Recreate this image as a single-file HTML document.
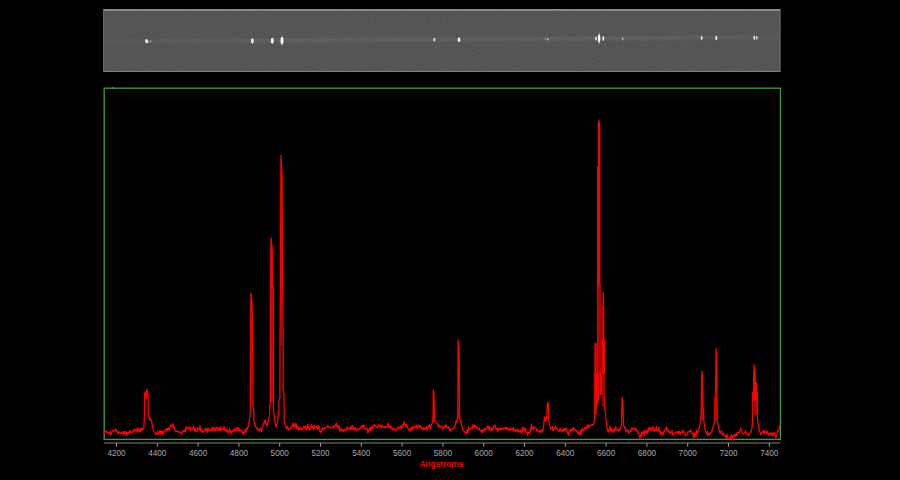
<!DOCTYPE html>
<html><head><meta charset="utf-8"><title>Spectrum</title>
<style>
html,body{margin:0;padding:0;background:#000;}
body{width:900px;height:480px;overflow:hidden;font-family:"Liberation Sans",sans-serif;}
svg{display:block}
.lab text{font-family:"Liberation Sans",sans-serif;font-size:8.2px;fill:#a8a8a8;text-anchor:middle}
.ttl{font-family:"Liberation Sans",sans-serif;font-size:8.3px;font-weight:bold;fill:#f00000;text-anchor:middle}
</style></head><body>
<svg width="900" height="480" viewBox="0 0 900 480">
<defs>
<filter id="nz" x="0" y="0" width="100%" height="100%" color-interpolation-filters="sRGB"><feTurbulence type="fractalNoise" baseFrequency="0.75" numOctaves="1" seed="5" result="t"/><feGaussianBlur stdDeviation="0.45"/><feColorMatrix type="matrix" values="0.10 0 0 0 0.284  0.10 0 0 0 0.284  0.10 0 0 0 0.284  0 0 0 0 1"/></filter>
<filter id="b1" x="-50%" y="-50%" width="200%" height="200%"><feGaussianBlur stdDeviation="0.65"/></filter>
<filter id="b2" x="-5%" y="-300%" width="110%" height="700%"><feGaussianBlur stdDeviation="1.1"/></filter>
<linearGradient id="sg" gradientUnits="userSpaceOnUse" x1="103" y1="0" x2="780" y2="0"><stop offset="0" stop-color="#fff" stop-opacity="0.02"/><stop offset="0.08" stop-color="#fff" stop-opacity="0.05"/><stop offset="0.25" stop-color="#fff" stop-opacity="0.085"/><stop offset="0.75" stop-color="#fff" stop-opacity="0.085"/><stop offset="0.9" stop-color="#fff" stop-opacity="0.07"/><stop offset="1" stop-color="#fff" stop-opacity="0.03"/></linearGradient>
<clipPath id="cs"><rect x="103" y="9" width="677.5" height="63"/></clipPath>
</defs>
<rect width="900" height="480" fill="#000"/>
<!-- spectrum image strip -->
<g clip-path="url(#cs)">
<rect x="103" y="9" width="677.5" height="63" fill="#555"/>
<rect x="103" y="9" width="677.5" height="63" filter="url(#nz)"/>
<line x1="103" y1="41.3" x2="780" y2="37.4" stroke="url(#sg)" stroke-width="3" filter="url(#b2)"/>
<g filter="url(#b1)"><ellipse cx="146.5" cy="41.0" rx="1.5" ry="2.0" fill="#fff" opacity="0.80"/><ellipse cx="147.4" cy="42.0" rx="1.2" ry="1.4" fill="#fff" opacity="0.60"/><ellipse cx="150.6" cy="41.2" rx="0.9" ry="1.5" fill="#fff" opacity="0.30"/><ellipse cx="252.4" cy="40.9" rx="1.3" ry="2.6" fill="#fff" opacity="1.00"/><ellipse cx="272.3" cy="40.8" rx="1.4" ry="3.0" fill="#fff" opacity="1.00"/><ellipse cx="282.0" cy="40.6" rx="1.5" ry="3.6" fill="#fff" opacity="1.00"/><ellipse cx="282.0" cy="40.8" rx="0.8" ry="5.6" fill="#fff" opacity="0.40"/><ellipse cx="434.3" cy="39.7" rx="1.0" ry="1.9" fill="#fff" opacity="0.80"/><ellipse cx="459.0" cy="39.7" rx="1.3" ry="2.3" fill="#fff" opacity="1.00"/><ellipse cx="547.8" cy="39.0" rx="1.0" ry="1.5" fill="#fff" opacity="0.45"/><ellipse cx="545.4" cy="39.0" rx="0.7" ry="1.3" fill="#fff" opacity="0.28"/><ellipse cx="596.0" cy="38.5" rx="0.9" ry="2.0" fill="#fff" opacity="0.85"/><ellipse cx="599.1" cy="38.4" rx="1.2" ry="4.0" fill="#fff" opacity="1.00"/><ellipse cx="599.1" cy="38.4" rx="0.7" ry="6.2" fill="#fff" opacity="0.45"/><ellipse cx="603.3" cy="38.5" rx="0.9" ry="2.4" fill="#fff" opacity="0.90"/><ellipse cx="622.7" cy="38.7" rx="0.8" ry="1.6" fill="#fff" opacity="0.50"/><ellipse cx="701.7" cy="38.0" rx="0.9" ry="2.0" fill="#fff" opacity="0.85"/><ellipse cx="716.3" cy="38.0" rx="0.9" ry="2.3" fill="#fff" opacity="1.00"/><ellipse cx="754.3" cy="37.7" rx="0.9" ry="2.2" fill="#fff" opacity="0.85"/><ellipse cx="756.8" cy="37.7" rx="0.8" ry="2.0" fill="#fff" opacity="0.80"/></g>
<rect x="103" y="9" width="677.5" height="1.8" fill="#8e8e8e"/>
<rect x="103" y="70.9" width="677.5" height="1.1" fill="#7e7e7e"/>
<rect x="103" y="9" width="0.8" height="63" fill="#6c6c6c"/>
<rect x="779.7" y="9" width="0.8" height="63" fill="#7a7a7a"/>
</g>
<!-- plot frame -->
<rect x="104.2" y="88.2" width="676.2" height="351.2" fill="none" stroke="#3e993f" stroke-width="1.35"/>
<rect x="111.8" y="87.3" width="2" height="1.2" fill="#8a9a8a" opacity="0.8"/>
<!-- spectrum -->
<g fill="#b00000">
<rect x="432.8" y="415.5" width="2.2" height="6"/>
<rect x="457.8" y="410.5" width="2" height="8"/>
<rect x="701" y="407.5" width="2.8" height="12.5"/>
<rect x="714.8" y="396.5" width="2.5" height="23.5"/>
<rect x="755.5" y="400" width="1.9" height="14.5"/>
<rect x="271" y="287" width="2.2" height="115" fill="#a80000"/><rect x="270.8" y="246" width="1.9" height="41.5" fill="#ff0000"/><rect x="280.9" y="180" width="1.3" height="165" fill="#a00000"/>
</g>
<g fill="none" stroke="#ff0000" stroke-width="1.3" stroke-linejoin="round" stroke-linecap="round">
<polyline points="104.0,432.4 104.5,433.1 105.0,432.0 105.5,431.7 106.0,430.7 106.5,431.4 107.0,432.9 107.5,432.3 108.0,433.4 108.5,432.7 109.0,433.2 109.5,433.3 110.0,431.3 110.5,434.8 111.0,434.6 111.5,434.1 112.0,430.8 112.5,430.3 113.0,430.8 113.5,430.8 114.0,431.2 114.5,430.3 115.0,430.5 115.5,428.9 116.0,430.5 116.5,431.0 117.0,430.0 117.5,433.4 118.0,432.4 118.5,433.6 119.0,431.7 119.5,432.0 120.0,432.9 120.5,433.1 121.0,433.9 121.5,433.4 122.0,432.4 122.5,431.7 123.0,432.2 123.5,434.3 124.0,431.7 124.5,433.3 125.0,433.8 125.5,431.7 126.0,433.9 126.5,435.7 127.0,431.8 127.5,433.9 128.0,433.7 128.5,432.3 129.0,433.5 129.5,432.4 130.0,430.1 130.5,432.5 131.0,432.1 131.5,432.4 132.0,432.9 132.5,431.5 133.0,431.1 133.5,429.3 134.0,431.6 134.5,430.0 135.0,430.2 135.5,429.1 136.0,429.3 136.5,429.8 137.0,432.0 137.5,427.7 138.0,428.3 138.5,430.3 139.0,432.1 139.5,431.5 140.0,428.9 140.5,428.7 141.0,431.8 141.5,429.5 142.0,428.0 142.5,429.6 143.0,429.5 143.7,429.0 144.4,417.0 144.7,393.0 145.6,391.5 146.3,398.0 147.2,389.0 147.8,393.0 148.1,399.0 148.4,416.0 149.1,417.5 149.8,420.0 150.7,418.5 151.4,420.5 152.0,424.0 152.7,427.0 153.3,430.0 154.0,431.7 154.5,432.1 155.0,432.6 155.5,434.3 156.0,433.4 156.5,433.5 157.0,433.8 157.5,431.3 158.0,434.8 158.5,434.4 159.0,433.8 159.5,430.6 160.0,432.2 160.5,434.0 161.0,430.7 161.5,432.6 162.0,434.1 162.5,431.1 163.0,434.7 163.5,433.1 164.0,431.4 164.5,431.2 165.0,430.8 165.5,429.6 166.0,430.8 166.5,428.4 167.0,428.6 167.5,430.4 168.0,429.0 168.5,427.8 169.0,429.9 169.5,430.3 170.0,427.2 170.5,425.4 171.0,426.3 171.5,425.6 172.0,424.8 172.5,426.2 173.0,423.7 173.5,427.8 174.0,425.9 174.5,427.8 175.0,430.3 175.5,431.3 176.0,431.4 176.5,431.1 177.0,431.2 177.5,431.5 178.0,432.1 178.5,431.3 179.0,431.9 179.5,432.4 180.0,431.8 180.5,432.8 181.0,432.7 181.5,434.4 182.0,432.1 182.5,430.9 183.0,430.7 183.5,430.9 184.0,431.8 184.5,430.0 185.0,430.6 185.5,432.1 186.0,426.3 186.5,427.7 187.0,429.0 187.5,428.8 188.0,428.2 188.5,427.0 189.0,428.0 189.5,427.4 190.0,426.9 190.5,431.0 191.0,428.9 191.5,428.2 192.0,429.2 192.5,429.1 193.0,429.4 193.5,426.2 194.0,429.0 194.5,431.0 195.0,428.4 195.5,429.8 196.0,431.2 196.5,430.9 197.0,431.5 197.5,427.4 198.0,428.9 198.5,428.8 199.0,429.8 199.5,430.2 200.0,425.3 200.5,430.9 201.0,428.5 201.5,432.0 202.0,430.1 202.5,431.7 203.0,432.5 203.5,430.3 204.0,430.2 204.5,430.5 205.0,429.2 205.5,428.6 206.0,430.8 206.5,430.3 207.0,428.7 207.5,432.7 208.0,427.9 208.5,430.6 209.0,429.3 209.5,429.9 210.0,430.7 210.5,430.2 211.0,430.7 211.5,427.9 212.0,427.8 212.5,430.3 213.0,428.2 213.5,428.0 214.0,427.3 214.5,430.6 215.0,429.9 215.5,430.8 216.0,427.7 216.5,428.9 217.0,427.4 217.5,429.7 218.0,430.7 218.5,427.6 219.0,430.8 219.5,430.2 220.0,428.9 220.5,426.9 221.0,431.3 221.5,429.1 222.0,428.2 222.5,429.2 223.0,429.0 223.5,430.1 224.0,426.7 224.5,429.8 225.0,430.7 225.5,431.1 226.0,429.4 226.5,429.2 227.0,431.8 227.5,430.9 228.0,431.2 228.5,433.2 229.0,431.3 229.5,429.1 230.0,431.8 230.5,430.2 231.0,433.8 231.5,433.1 232.0,431.2 232.5,431.2 233.0,431.5 233.5,429.9 234.0,430.7 234.5,428.2 235.0,429.5 235.5,430.3 236.0,430.8 236.5,428.3 237.0,430.5 237.5,427.4 238.0,428.6 238.5,427.7 239.0,431.7 239.5,429.0 240.0,430.7 240.5,430.6 241.0,431.0 241.5,430.5 242.0,431.8 242.5,434.0 243.0,432.1 243.5,432.9 244.0,433.8 244.5,431.8 245.0,429.9 245.5,430.3 246.0,431.8 246.5,427.9 247.4,429.0 248.1,427.3 249.0,422.0 249.8,418.0 250.3,410.0 250.7,320.0 251.0,292.8 252.0,301.5 252.5,330.0 253.0,407.0 253.7,409.0 253.9,420.8 255.0,425.0 256.3,428.4 257.0,427.6 257.5,430.0 258.0,430.1 258.5,429.5 259.0,430.7 259.5,430.0 260.0,428.5 260.5,428.2 261.0,429.5 261.5,431.7 262.0,428.4 262.5,426.6 263.0,425.4 263.5,423.1 264.0,423.4 264.5,420.6 265.0,422.6 265.5,420.3 266.0,424.8 266.5,424.5 267.1,425.7 268.4,420.8 269.6,414.0 270.0,404.0 270.6,402.0 270.7,300.0 271.0,238.0 272.0,251.0 272.3,286.5 273.3,288.0 273.4,300.0 273.4,411.0 274.2,415.0 274.7,419.8 275.5,424.0 276.3,427.3 276.5,424.6 277.1,425.0 277.4,423.0 278.2,416.0 278.9,410.0 279.0,400.0 279.9,398.0 280.0,350.0 280.6,250.0 281.0,155.5 282.0,174.0 282.4,250.0 283.2,350.0 283.2,391.0 284.0,393.0 284.2,420.0 285.0,424.5 286.0,427.3 286.5,428.9 287.0,428.1 287.5,426.1 288.0,428.3 288.5,430.2 289.0,429.0 289.5,429.7 290.0,428.9 290.5,428.1 291.0,426.9 291.5,427.6 292.0,426.6 292.5,426.1 293.0,422.8 293.5,426.3 294.0,426.6 294.5,424.4 295.0,424.0 295.5,427.1 296.0,423.1 296.5,426.4 297.0,429.4 297.5,425.8 298.0,428.4 298.5,430.0 299.0,427.7 299.5,428.8 300.0,429.4 300.5,427.3 301.0,428.5 301.5,429.2 302.0,430.0 302.5,428.6 303.0,428.0 303.5,426.6 304.0,427.1 304.5,428.4 305.0,427.3 305.5,425.9 306.0,425.7 306.5,429.9 307.0,428.1 307.5,427.8 308.0,424.0 308.5,428.3 309.0,428.4 309.5,430.0 310.0,428.1 310.5,427.2 311.0,427.7 311.5,424.3 312.0,427.8 312.5,427.0 313.0,425.9 313.5,428.5 314.0,429.3 314.5,425.4 315.0,426.4 315.5,427.7 316.0,427.7 316.5,426.8 317.0,425.8 317.5,429.4 318.0,427.8 318.5,425.8 319.0,426.3 319.5,430.9 320.0,430.8 320.5,432.6 321.0,432.1 321.5,430.2 322.0,431.1 322.5,427.6 323.0,428.8 323.5,429.1 324.0,429.4 324.5,427.4 325.0,427.7 325.5,428.0 326.0,427.5 326.5,427.5 327.0,426.5 327.5,425.7 328.0,427.5 328.5,427.0 329.0,426.2 329.5,426.8 330.0,428.0 330.5,427.8 331.0,428.0 331.5,427.7 332.0,427.8 332.5,427.3 333.0,425.8 333.5,427.6 334.0,427.9 334.5,426.7 335.0,425.4 335.5,425.7 336.0,423.5 336.5,423.1 337.0,426.3 337.5,425.8 338.0,428.6 338.5,427.0 339.0,425.6 339.5,427.9 340.0,431.5 340.5,429.3 341.0,428.4 341.5,429.3 342.0,430.7 342.5,430.4 343.0,429.8 343.5,431.3 344.0,430.1 344.5,429.0 345.0,429.6 345.5,430.7 346.0,429.8 346.5,429.8 347.0,427.0 347.5,428.1 348.0,429.1 348.5,427.8 349.0,429.4 349.5,428.6 350.0,428.6 350.5,426.9 351.0,429.9 351.5,427.9 352.0,425.7 352.5,425.8 353.0,429.3 353.5,426.6 354.0,429.1 354.5,430.1 355.0,429.3 355.5,427.7 356.0,429.3 356.5,429.5 357.0,430.4 357.5,429.9 358.0,428.8 358.5,429.8 359.0,429.2 359.5,428.6 360.0,428.1 360.5,427.5 361.0,428.4 361.5,426.0 362.0,426.3 362.5,426.8 363.0,425.1 363.5,426.8 364.0,425.2 364.5,427.2 365.0,429.2 365.5,429.5 366.0,429.1 366.5,429.2 367.0,428.1 367.5,432.5 368.0,431.2 368.5,432.2 369.0,429.6 369.5,430.0 370.0,427.5 370.5,430.3 371.0,430.1 371.5,426.1 372.0,427.9 372.5,428.5 373.0,425.3 373.5,425.0 374.0,425.7 374.5,426.0 375.0,424.7 375.5,426.3 376.0,426.3 376.5,426.9 377.0,427.0 377.5,428.1 378.0,427.7 378.5,424.7 379.0,425.7 379.5,425.1 380.0,425.2 380.5,426.5 381.0,426.8 381.5,427.5 382.0,425.0 382.5,425.6 383.0,427.2 383.5,427.1 384.0,427.1 384.5,427.3 385.0,426.3 385.5,428.0 386.0,427.4 386.5,426.8 387.0,425.9 387.5,426.4 388.0,423.1 388.5,425.5 389.0,427.1 389.5,425.4 390.0,427.8 390.5,428.1 391.0,426.4 391.5,428.1 392.0,428.3 392.5,429.5 393.0,429.9 393.5,429.3 394.0,428.4 394.5,429.5 395.0,429.8 395.5,431.0 396.0,430.7 396.5,429.0 397.0,427.9 397.5,428.7 398.0,427.9 398.5,427.0 399.0,427.9 399.5,427.1 400.0,427.4 400.5,427.5 401.0,425.8 401.5,428.8 402.0,425.0 402.5,426.3 403.0,424.8 403.5,426.0 404.0,421.5 404.5,423.4 405.0,424.6 405.5,425.0 406.0,427.0 406.5,424.4 407.0,426.3 407.5,427.0 408.0,428.4 408.5,429.1 409.0,429.6 409.5,430.9 410.0,428.3 410.5,430.6 411.0,427.2 411.5,428.2 412.0,430.0 412.5,426.9 413.0,427.2 413.5,428.5 414.0,427.0 414.5,425.9 415.0,427.2 415.5,427.5 416.0,427.6 416.5,425.5 417.0,428.4 417.5,428.0 418.0,425.7 418.5,425.7 419.0,425.0 419.5,427.7 420.0,425.5 420.5,427.7 421.0,426.7 421.5,426.8 422.0,429.0 422.5,430.2 423.0,428.6 423.5,427.6 424.0,429.3 424.5,428.0 425.0,428.3 425.5,429.6 426.0,429.0 426.5,426.7 427.0,430.1 427.5,427.1 428.0,427.9 428.5,425.9 429.0,426.5 429.5,424.4 430.0,429.1 430.5,428.9 431.5,424.5 432.3,423.0 432.9,420.5 433.1,416.0 433.3,390.0 434.0,393.0 434.4,416.0 434.9,421.0 436.0,422.5 437.5,424.0 438.3,426.5 439.0,425.0 440.2,427.3 441.0,426.4 441.5,426.2 442.0,426.2 442.5,429.8 443.0,427.9 443.5,428.1 444.0,427.4 444.5,427.3 445.0,425.7 445.5,426.7 446.0,424.6 446.5,425.9 447.0,426.9 447.5,427.6 448.0,427.2 448.5,426.9 449.0,428.7 449.5,428.4 450.0,431.1 450.5,430.3 451.0,429.4 451.5,429.1 452.0,429.0 452.5,428.8 453.0,428.6 453.5,428.4 454.3,427.3 455.3,424.5 456.0,421.0 456.6,422.5 457.3,419.0 457.8,412.0 458.1,340.0 459.1,352.5 459.5,412.0 459.9,419.0 460.8,422.0 461.8,426.0 462.9,429.5 464.0,431.0 465.0,432.8 465.5,432.9 466.0,432.4 466.5,433.8 467.0,429.7 467.5,430.1 468.0,433.0 468.5,426.9 469.0,428.3 469.5,429.0 470.0,428.7 470.5,428.8 471.0,427.7 471.5,428.2 472.0,427.6 472.5,428.3 473.0,424.7 473.5,425.8 474.0,426.7 474.5,425.2 475.0,425.0 475.5,427.5 476.0,426.2 476.5,428.2 477.0,428.7 477.5,428.5 478.0,429.1 478.5,428.8 479.0,427.6 479.5,429.8 480.0,430.9 480.5,430.1 481.0,431.1 481.5,432.3 482.0,429.9 482.5,431.4 483.0,432.6 483.5,429.2 484.0,429.7 484.5,429.0 485.0,430.8 485.5,429.0 486.0,429.4 486.5,427.1 487.0,427.6 487.5,427.3 488.0,425.5 488.5,429.9 489.0,429.6 489.5,426.7 490.0,430.2 490.5,429.5 491.0,430.6 491.5,430.0 492.0,427.3 492.5,428.4 493.0,430.1 493.5,427.1 494.0,426.1 494.5,425.2 495.0,425.0 495.5,427.3 496.0,429.5 496.5,428.3 497.0,428.5 497.5,431.4 498.0,428.4 498.5,428.7 499.0,430.2 499.5,430.2 500.0,428.2 500.5,428.0 501.0,429.9 501.5,429.8 502.0,427.9 502.5,429.0 503.0,428.3 503.5,429.3 504.0,428.4 504.5,428.1 505.0,427.6 505.5,429.1 506.0,429.2 506.5,427.3 507.0,429.1 507.5,427.3 508.0,428.6 508.5,429.7 509.0,430.9 509.5,428.8 510.0,429.4 510.5,429.8 511.0,427.8 511.5,429.7 512.0,428.9 512.5,430.3 513.0,428.5 513.5,427.5 514.0,430.0 514.5,430.5 515.0,429.6 515.5,431.5 516.0,430.2 516.5,429.9 517.0,431.3 517.5,428.9 518.0,430.2 518.5,431.0 519.0,432.2 519.5,431.0 520.0,431.7 520.5,430.5 521.0,431.8 521.5,433.6 522.0,429.3 522.5,431.8 523.0,426.7 523.5,428.2 524.0,429.0 524.5,430.8 525.0,428.6 525.5,428.2 526.0,432.3 526.5,432.7 527.0,432.6 527.5,435.3 528.0,432.4 528.5,432.7 529.0,433.7 529.5,432.2 530.0,433.1 530.5,428.7 531.0,429.0 531.5,424.4 532.0,429.0 532.5,427.3 533.0,428.7 533.5,429.9 534.0,427.0 534.5,427.2 535.0,427.4 535.5,427.5 536.0,428.2 536.5,430.3 537.0,430.0 537.5,430.3 538.0,430.2 538.5,431.8 539.0,431.5 539.5,430.9 540.0,432.1 540.5,431.3 541.0,429.8 541.5,432.7 542.0,431.2 542.5,429.1 543.0,430.0 543.6,426.0 544.2,419.0 544.8,417.0 545.3,421.0 545.8,417.5 546.4,420.0 546.9,416.0 547.3,404.0 547.9,402.5 548.4,405.0 548.7,420.0 549.2,423.0 549.5,425.0 550.3,427.5 551.0,429.0 551.5,428.8 552.0,428.4 552.5,426.5 553.0,431.0 553.5,429.2 554.0,429.6 554.5,428.5 555.0,427.8 555.5,425.8 556.0,428.7 556.5,428.2 557.0,428.4 557.5,429.9 558.0,430.2 558.5,431.6 559.0,430.4 559.5,430.7 560.0,427.9 560.5,429.9 561.0,431.1 561.5,431.8 562.0,429.5 562.5,429.5 563.0,431.4 563.5,428.7 564.0,429.7 564.5,430.6 565.0,428.2 565.5,429.9 566.0,428.4 566.5,430.5 567.0,431.1 567.5,432.2 568.0,434.4 568.5,435.5 569.0,431.3 569.5,431.0 570.0,431.9 570.5,429.5 571.0,431.0 571.5,430.7 572.0,429.2 572.5,430.3 573.0,427.8 573.5,430.7 574.0,428.0 574.5,429.1 575.0,429.4 575.5,429.7 576.0,431.4 576.5,430.8 577.0,430.6 577.5,432.2 578.0,433.9 578.5,432.4 579.0,433.2 579.5,434.4 580.0,432.7 580.5,430.3 581.0,434.6 581.5,433.8 582.0,428.1 582.5,430.1 583.0,430.3 583.5,430.7 584.0,430.0 584.5,428.5 585.0,427.2 585.5,428.4 586.0,429.2 586.5,426.3 587.0,426.1 587.5,427.2 588.0,424.6 588.5,426.5 589.0,426.1 589.5,427.0 590.0,425.4 590.5,425.0 591.0,425.3 591.5,425.3 592.0,424.2 592.5,424.6 593.0,425.2 594.0,423.0 594.5,418.0 595.0,413.0 595.4,343.0 595.8,400.0"/>
<polyline points="604.2,400.0 604.5,407.0 605.3,412.5 606.0,419.0 606.7,425.5 607.3,429.5 608.0,431.5 608.5,432.0 609.0,428.7 609.5,429.0 610.0,426.2 610.5,431.5 611.0,428.1 611.5,429.7 612.0,431.2 612.5,429.6 613.0,432.6 613.5,431.4 614.0,428.6 614.5,430.6 615.0,431.2 615.5,426.7 616.0,429.5 616.5,429.0 617.0,429.6 617.5,429.8 618.0,431.1 618.5,429.5 619.0,431.1 619.5,428.8 620.0,429.6 620.9,427.0 621.5,424.0 621.8,410.0 622.1,397.3 622.8,400.0 623.1,410.0 623.4,424.0 624.0,426.5 624.6,428.0 625.0,427.2 625.5,428.9 626.0,431.9 626.5,431.1 627.0,430.6 627.5,429.7 628.0,430.4 628.5,431.9 629.0,433.2 629.5,431.9 630.0,431.5 630.5,430.2 631.0,431.4 631.5,428.6 632.0,427.8 632.5,429.7 633.0,428.7 633.5,428.4 634.0,428.1 634.5,428.6 635.0,429.8 635.5,429.9 636.0,428.5 636.5,431.0 637.0,431.2 637.5,430.7 638.0,433.8 638.5,433.4 639.0,434.2 639.5,436.6 640.0,438.2 640.5,434.7 641.0,435.2 641.5,432.7 642.0,435.8 642.5,431.4 643.0,433.7 643.5,431.6 644.0,433.6 644.5,435.6 645.0,429.8 645.5,432.0 646.0,432.6 646.5,431.4 647.0,430.2 647.5,433.2 648.0,430.1 648.5,427.8 649.0,430.7 649.5,427.3 650.0,430.7 650.5,428.3 651.0,429.1 651.5,430.3 652.0,428.6 652.5,427.0 653.0,426.9 653.5,430.7 654.0,430.4 654.5,428.7 655.0,431.1 655.5,430.5 656.0,430.5 656.5,426.7 657.0,429.0 657.5,430.3 658.0,429.9 658.5,430.7 659.0,427.1 659.5,431.0 660.0,431.9 660.5,435.1 661.0,431.3 661.5,432.3 662.0,433.0 662.5,434.4 663.0,432.9 663.5,434.2 664.0,431.0 664.5,431.6 665.0,429.8 665.5,429.9 666.0,428.1 666.5,426.8 667.0,430.8 667.5,430.4 668.0,430.0 668.5,431.6 669.0,433.2 669.5,431.0 670.0,432.2 670.5,433.2 671.0,433.4 671.5,432.5 672.0,430.4 672.5,434.8 673.0,433.8 673.5,433.5 674.0,433.1 674.5,433.7 675.0,432.8 675.5,432.0 676.0,432.3 676.5,432.4 677.0,432.3 677.5,431.6 678.0,433.8 678.5,431.3 679.0,433.7 679.5,431.6 680.0,433.2 680.5,434.5 681.0,433.0 681.5,431.7 682.0,432.7 682.5,432.7 683.0,430.3 683.5,432.2 684.0,433.7 684.5,433.4 685.0,434.6 685.5,435.9 686.0,435.4 686.5,434.9 687.0,433.9 687.5,432.2 688.0,432.0 688.5,431.7 689.0,431.6 689.5,431.8 690.0,429.8 690.5,431.6 691.0,432.0 691.5,431.3 692.0,433.0 692.5,434.1 693.0,433.8 693.5,437.6 694.0,432.7 694.5,436.7 695.0,433.6 695.5,435.9 696.0,436.8 696.5,430.1 697.0,433.2 697.5,433.4 698.0,431.4 698.8,429.0 699.6,426.0 700.4,423.0 700.9,420.0 701.2,408.0 701.6,380.0 701.9,371.3 702.4,376.0 702.7,408.0 703.6,410.0 703.7,420.0 704.2,424.0 705.0,429.0 705.7,432.0 706.5,433.0 707.0,434.4 707.5,431.3 708.0,435.6 708.5,434.8 709.0,434.2 709.5,433.3 710.0,434.6 710.5,433.1 711.0,433.0 712.0,430.5 713.0,427.5 714.0,424.0 714.8,420.5 715.0,397.0 715.6,392.0 716.1,349.0 716.7,353.0 717.0,397.0 717.2,420.0 717.9,424.0 718.6,428.0 719.3,431.0 720.0,433.0 720.5,432.8 721.0,432.3 721.5,430.5 722.0,433.7 722.5,434.4 723.0,435.4 723.5,433.7 724.0,435.0 724.5,436.0 725.0,435.7 725.5,437.3 726.0,438.5 726.5,435.1 727.0,434.2 727.5,437.9 728.0,439.1 728.5,438.6 729.0,438.7 729.5,437.2 730.0,436.9 730.5,438.7 731.0,436.2 731.5,434.9 732.0,435.7 732.5,439.8 733.0,438.9 733.5,435.3 734.0,435.0 734.5,435.9 735.0,434.3 735.5,436.6 736.0,434.5 736.5,433.0 737.0,435.6 737.5,432.8 738.0,433.4 738.5,432.7 739.0,431.9 739.5,432.3 740.0,430.6 740.5,428.7 741.0,428.7 741.5,430.4 742.0,431.6 742.5,433.0 743.0,433.6 743.5,434.1 744.0,433.5 744.5,432.3 745.0,432.3 745.5,430.4 746.0,432.8 746.5,433.9 747.0,434.2 747.5,433.6 748.0,433.8 748.5,435.4 749.0,434.5 749.5,434.5 750.0,433.5 750.5,432.1 751.0,432.0 751.8,429.0 752.3,424.0 752.7,416.0 752.9,393.0 753.6,391.0 754.1,365.0 754.8,369.0 755.3,382.0 756.5,383.0 756.6,392.0 757.3,393.0 757.4,415.0 757.8,422.0 758.5,427.0 759.3,431.0 760.3,433.0 761.0,435.0 761.5,432.3 762.0,432.2 762.5,431.3 763.0,431.0 763.5,433.5 764.0,433.3 764.5,430.7 765.0,431.5 765.5,432.7 766.0,432.6 766.5,433.6 767.0,430.9 767.5,432.0 768.0,433.7 768.5,435.3 769.0,434.0 769.5,433.1 770.0,434.1 770.5,433.4 771.0,432.9 771.5,435.6 772.0,432.7 772.5,433.3 773.0,435.7 773.5,434.2 774.0,432.9 774.5,432.7 775.0,435.0 775.5,437.5 776.0,437.3 776.5,436.6 777.0,433.6 777.5,432.6 778.0,430.7 778.5,430.5 779.0,430.6 779.5,425.7 780.0,425.9"/>
</g>
<polygon points="753.2,392 753.4,370 755.2,370 755.2,382.5 757.2,382.5 757.2,392 757.9,392 757.9,400.5 752.2,400.5 752.2,392" fill="#ff0000"/>
<rect x="754.3" y="400" width="1.2" height="14.5" fill="#f00000"/>
<!-- H-alpha / [NII] complex -->
<g>
<rect x="594.6" y="343" width="2.1" height="72" rx="0.8" fill="#ff0000"/>
<rect x="594.6" y="373" width="4.4" height="27.5" fill="#ff0000"/>
<polygon points="594.6,400 599,400 598,403.5 596.6,407.5 595.8,411.5 595.6,414.5 594.6,414.5" fill="#ff0000"/>
<rect x="596.7" y="366" width="4.2" height="7" fill="#b20000"/>
<rect x="597" y="284" width="4" height="89" fill="#b20000"/>
<rect x="597" y="284" width="1.1" height="89" fill="#ee0000"/>
<path d="M597 284.5 L597 167 L597.9 165.5 L597.9 124 Q598.5 118.6 599.3 119.4 L600.3 125 L600.3 284.5 Z" fill="#ff0000"/>
<rect x="599.8" y="372.8" width="2.4" height="22.4" fill="#ff0000"/>
<rect x="601.6" y="340" width="3.4" height="34" fill="#ff0000"/>
<rect x="602.5" y="292" width="1.5" height="18" rx="0.7" fill="#ff0000"/><rect x="602.2" y="306" width="2.1" height="36" fill="#ff0000"/>
<rect x="602.2" y="374.3" width="2.8" height="32" fill="#b20000"/>
<rect x="604" y="396" width="1" height="10.5" fill="#ff0000" opacity="0.55"/>
</g>
<!-- axis -->
<rect x="104" y="442.1" width="676.3" height="1.8" fill="#484848"/>
<rect x="116.0" y="443" width="1" height="3.8" fill="#9a9a9a"/><rect x="156.8" y="443" width="1" height="3.8" fill="#9a9a9a"/><rect x="197.6" y="443" width="1" height="3.8" fill="#9a9a9a"/><rect x="238.4" y="443" width="1" height="3.8" fill="#9a9a9a"/><rect x="279.2" y="443" width="1" height="3.8" fill="#9a9a9a"/><rect x="320.0" y="443" width="1" height="3.8" fill="#9a9a9a"/><rect x="360.8" y="443" width="1" height="3.8" fill="#9a9a9a"/><rect x="401.6" y="443" width="1" height="3.8" fill="#9a9a9a"/><rect x="442.4" y="443" width="1" height="3.8" fill="#9a9a9a"/><rect x="483.2" y="443" width="1" height="3.8" fill="#9a9a9a"/><rect x="524.0" y="443" width="1" height="3.8" fill="#9a9a9a"/><rect x="564.8" y="443" width="1" height="3.8" fill="#9a9a9a"/><rect x="605.6" y="443" width="1" height="3.8" fill="#9a9a9a"/><rect x="646.4" y="443" width="1" height="3.8" fill="#9a9a9a"/><rect x="687.2" y="443" width="1" height="3.8" fill="#9a9a9a"/><rect x="728.0" y="443" width="1" height="3.8" fill="#9a9a9a"/><rect x="768.8" y="443" width="1" height="3.8" fill="#9a9a9a"/>
<g class="lab"><text x="116.5" y="456">4200</text><text x="157.3" y="456">4400</text><text x="198.1" y="456">4600</text><text x="238.9" y="456">4800</text><text x="279.7" y="456">5000</text><text x="320.5" y="456">5200</text><text x="361.3" y="456">5400</text><text x="402.1" y="456">5600</text><text x="442.9" y="456">5800</text><text x="483.7" y="456">6000</text><text x="524.5" y="456">6200</text><text x="565.3" y="456">6400</text><text x="606.1" y="456">6600</text><text x="646.9" y="456">6800</text><text x="687.7" y="456">7000</text><text x="728.5" y="456">7200</text><text x="769.3" y="456">7400</text></g>
<text class="ttl" x="441.4" y="467.3">Angstroms</text>
</svg>
</body></html>
